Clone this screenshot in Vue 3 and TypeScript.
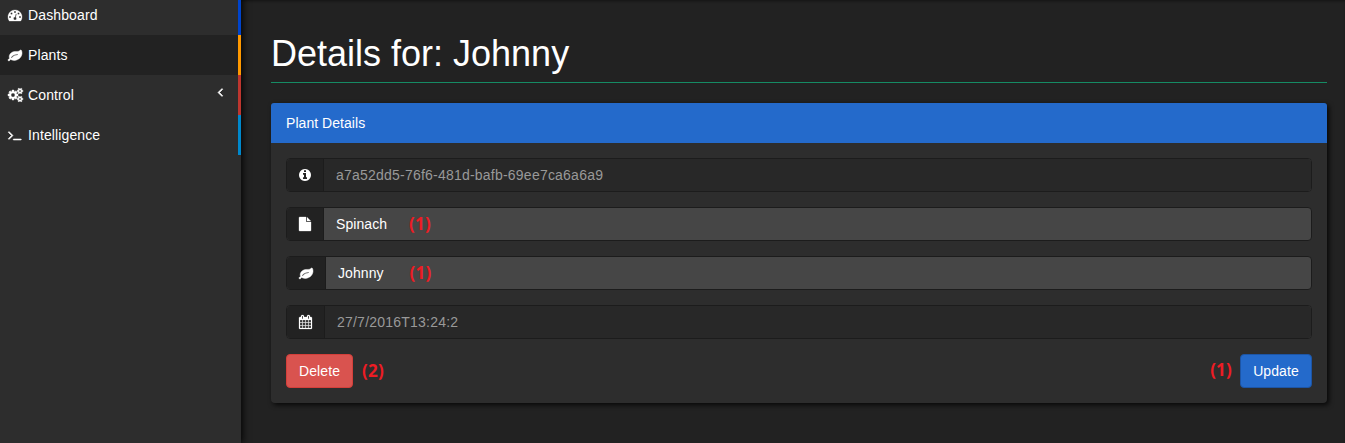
<script setup lang="ts">
import { ref } from 'vue'

interface Glyph { width: number; x: number; path: string; weight?: number }
interface NavItem { label: string; glyph: Glyph; accent: string; active?: boolean; expandable?: boolean }
interface Field { glyph: Glyph; value: string; kind: string; disabled: boolean; note?: string }

const leaf: Glyph = {
  width: 14, x: 0, weight: 60,
  path: 'M1280 832q0-26-19-45t-45-19q-172 0-318 49.5t-259.5 134-235.5 219.5q-19 21-19 45 0 26 19 45t45 19q24 0 45-19 27-24 74-71t67-66q137-124 268.5-176t313.5-52q26 0 45-19t19-45zm512-198q0 95-20 193-46 224-184.5 383t-357.5 268q-214 108-438 108-148 0-286-47-15-5-88-42t-96-37q-16 0-39.5 32t-45 70-52.5 70-60 32q-43 0-63.5-17.5t-45.5-59.5q-2-4-6-11t-5.5-10-3-9.5-1.5-13.5q0-35 31-73.5t68-65.5 68-56 31-48q0-4-14-38t-16-44q-9-51-9-104 0-115 43.5-220t119-184.5 170.5-139 204-95.5q55-18 145-25.5t179.5-9 178.5-6 163.5-24 113.5-56.5l29.5-29.5 29.5-28 27-20 36.5-16 43.5-4.5q39 0 70.5 46t47.5 112 24 124 8 96z',
}
const gauge: Glyph = {
  width: 14, x: 0, weight: 40,
  path: 'M384 1152q0-53-37.5-90.5t-90.5-37.5-90.5 37.5-37.5 90.5 37.5 90.5 90.5 37.5 90.5-37.5 37.5-90.5zm192-448q0-53-37.5-90.5t-90.5-37.5-90.5 37.5-37.5 90.5 37.5 90.5 90.5 37.5 90.5-37.5 37.5-90.5zm428 481l101-382q6-26-7.5-48.5t-38.5-29.5-48 6.5-30 39.5l-101 382q-60 5-107 43.5t-63 98.5q-20 77 20 146t117 89 146-20 89-117q16-60-6-117t-72-91zm660-33q0-53-37.5-90.5t-90.5-37.5-90.5 37.5-37.5 90.5 37.5 90.5 90.5 37.5 90.5-37.5 37.5-90.5zm-640-640q0-53-37.5-90.5t-90.5-37.5-90.5 37.5-37.5 90.5 37.5 90.5 90.5 37.5 90.5-37.5 37.5-90.5zm448 192q0-53-37.5-90.5t-90.5-37.5-90.5 37.5-37.5 90.5 37.5 90.5 90.5 37.5 90.5-37.5 37.5-90.5zm320 448q0 261-141 483-19 29-54 29h-1402q-35 0-54-29-141-221-141-483 0-182 71-348t191-286 286-191 348-71 348 71 286 191 191 286 71 348z',
}
const smallCog = 'v140q0 16-149 31-12 27-30 52 51 113 51 138 0 4-4 7-122 71-124 71-8 0-46-47t-52-68q-20 2-30 2t-30-2q-14 21-52 68t-46 47q-2 0-124-71-4-3-4-7 0-25 51-138-18-25-30-52-149-15-149-31v-140q0-16 149-31 13-29 30-52-51-113-51-138 0-4 4-7 4-2 35-20t59-34 30-16q8 0 46 46.5t52 67.5q20-2 30-2t30 2q51-71 92-112l6-2q4 0 124 70 4 3 4 7 0 25-51 138 17 23 30 52 149 15 149 31z'
const cogs: Glyph = {
  width: 15, x: 0, weight: 60,
  path: 'M896 896q0-106-75-181t-181-75-181 75-75 181 75 181 181 75 181-75 75-181zm768 512q0-52-38-90t-90-38-90 38-38 90q0 53 37.5 90.5t90.5 37.5 90.5-37.5 37.5-90.5zm0-1024q0-52-38-90t-90-38-90 38-38 90q0 53 37.5 90.5t90.5 37.5 90.5-37.5 37.5-90.5zm-384 421v185q0 10-7 19.5t-16 10.5l-155 24q-11 35-32 76 34 48 90 115 7 11 7 20 0 12-7 19-23 30-82.5 89.5t-78.5 59.5q-11 0-21-7l-115-90q-37 19-77 31-11 108-23 155-7 24-30 24h-186q-11 0-20-7.5t-10-17.5l-23-153q-34-10-75-31l-118 89q-7 7-20 7-11 0-21-8-144-133-144-160 0-9 7-19 10-14 41-53t47-61q-23-44-35-82l-152-24q-10-1-17-9.5t-7-19.5v-185q0-10 7-19.5t16-10.5l155-24q11-35 32-76-34-48-90-115-7-11-7-20 0-12 7-20 22-30 82-89t79-59q11 0 21 7l115 90q34-18 77-32 11-108 23-154 7-24 30-24h186q11 0 20 7.5t10 17.5l23 153q34 10 75 31l118-89q8-7 20-7 11 0 21 8 144 133 144 160 0 8-7 19-12 16-42 54t-45 60q23 48 34 82l152 23q10 2 17 10.5t7 19.5zM1920 1338' + smallCog + 'M1920 314' + smallCog,
}
const terminal: Glyph = {
  width: 14, x: -32, weight: 70,
  path: 'M585 983l-466 466q-10 10-23 10t-23-10l-50-50q-10-10-10-23t10-23l393-393-393-393q-10-10-10-23t10-23l50-50q10-10 23-10t23 10l466 466q10 10 10 23t-10 23zm1079 457v64q0 14-9 23t-23 9h-960q-14 0-23-9t-9-23v-64q0-14 9-23t23-9h960q14 0 23 9t9 23z',
}
const info: Glyph = {
  width: 12, x: 128,
  path: 'M1152 1376v-160q0-14-9-23t-23-9h-96v-512q0-14-9-23t-23-9h-320q-14 0-23 9t-9 23v160q0 14 9 23t23 9h96v320h-96q-14 0-23 9t-9 23v160q0 14 9 23t23 9h448q14 0 23-9t9-23zm-128-896v-160q0-14-9-23t-23-9h-192q-14 0-23 9t-9 23v160q0 14 9 23t23 9h192q14 0 23-9t9-23zm640 416q0 209-103 385.5t-279.5 279.5-385.5 103-385.5-103-279.5-279.5-103-385.5 103-385.5 279.5-279.5 385.5-103 385.5 103 279.5 279.5 103 385.5z',
}
const file: Glyph = {
  width: 12, x: 128, weight: 40,
  path: 'M1152 512v-472q22 14 36 28l408 408q14 14 28 36h-472zm-128 32q0 40 28 68t68 28h544v1056q0 40-28 68t-68 28h-1344q-40 0-68-28t-28-68v-1600q0-40 28-68t68-28h800v544z',
}
const calendar: Glyph = {
  width: 13, x: 64, weight: 30,
  path: 'M192 1664h288v-288h-288v288zm352 0h320v-288h-320v288zm-352-352h288v-320h-288v320zm352 0h320v-320h-320v320zm-352-384h288v-288h-288v288zm736 736h320v-288h-320v288zm-384-736h320v-288h-320v288zm768 736h288v-288h-288v288zm-384-352h320v-320h-320v320zm-352-864v-288q0-13-9.5-22.5t-22.5-9.5h-64q-13 0-22.5 9.5t-9.5 22.5v288q0 13 9.5 22.5t22.5 9.5h64q13 0 22.5-9.5t9.5-22.5zm736 864h288v-320h-288v320zm-384-384h320v-288h-320v288zm384 0h288v-288h-288v288zm32-480v-288q0-13-9.5-22.5t-22.5-9.5h-64q-13 0-22.5 9.5t-9.5 22.5v288q0 13 9.5 22.5t22.5 9.5h64q13 0 22.5-9.5t9.5-22.5zm384-64v1280q0 52-38 90t-90 38h-1408q-52 0-90-38t-38-90v-1280q0-52 38-90t90-38h128v-96q0-66 47-113t113-47h64q66 0 113 47t47 113v96h384v-96q0-66 47-113t113-47h64q66 0 113 47t47 113v96h128q52 0 90 38t38 90z',
}

const box = (g: Glyph) => `${g.x} 0 ${g.width * 128} 1792`

const nav: NavItem[] = [
  { label: 'Dashboard', glyph: gauge, accent: 'blue' },
  { label: 'Plants', glyph: leaf, accent: 'orange', active: true },
  { label: 'Control', glyph: cogs, accent: 'red', expandable: true },
  { label: 'Intelligence', glyph: terminal, accent: 'cyan' },
]

const fields = ref<Field[]>([
  { glyph: info, value: 'a7a52dd5-76f6-481d-bafb-69ee7ca6a6a9', kind: 'id', disabled: true },
  { glyph: file, value: 'Spinach', kind: 'type', disabled: false, note: '(1)' },
  { glyph: leaf, value: 'Johnny', kind: 'name', disabled: false, note: '(1)' },
  { glyph: calendar, value: '27/7/2016T13:24:2', kind: 'date', disabled: true },
])
</script>

<template>
  <div class="layout">
    <nav class="sidebar">
      <a v-for="item in nav" :key="item.label" class="nav-item" :class="[item.accent, { active: item.active }]">
        <span class="nav-icon">
          <svg :width="item.glyph.width" height="14" :viewBox="box(item.glyph)">
            <path :d="item.glyph.path" :stroke-width="item.glyph.weight ?? 0" />
          </svg>
        </span>
        <span>{{ item.label }}</span>
        <svg v-if="item.expandable" class="chevron" width="5" height="14" viewBox="608 0 640 1792">
          <path stroke-width="80" d="M1203 544q0 13-10 23l-393 393 393 393q10 10 10 23t-10 23l-50 50q-10 10-23 10t-23-10l-466-466q-10-10-10-23t10-23l466-466q10-10 23-10t23 10l50 50q10 10 10 23z" />
        </svg>
      </a>
    </nav>
    <main class="content">
      <h1>Details for: Johnny</h1>
      <section class="panel">
        <header>Plant Details</header>
        <div class="panel-body">
          <div v-for="field in fields" :key="field.kind" class="field" :class="[field.kind, { disabled: field.disabled }]">
            <span class="addon">
              <svg :width="field.glyph.width" height="14" :viewBox="box(field.glyph)">
                <path :d="field.glyph.path" :stroke-width="field.glyph.weight ?? 0" />
              </svg>
            </span>
            <div class="control">
              <span>{{ field.value }}</span>
              <b v-if="field.note" class="note">{{ field.note }}</b>
            </div>
          </div>
          <div class="actions">
            <button class="delete">Delete</button>
            <b class="note">(2)</b>
            <b class="note last">(1)</b>
            <button class="update">Update</button>
          </div>
        </div>
      </section>
    </main>
  </div>
</template>

<style>
body {
  margin: 0;
  background: #222;
  overflow: hidden;
}
</style>

<style scoped>
.layout, .layout * { box-sizing: border-box; }
.layout {
  display: flex;
  height: 443px;
  overflow: hidden;
  background: #222;
  color: #fff;
  font: 14px/20px "Liberation Sans", Arial, sans-serif;
}
svg { display: block; overflow: visible; fill: currentColor; }
path { stroke: currentColor; }
path[stroke-width="0"] { stroke: none; }
.sidebar {
  width: 241px;
  flex: none;
  margin-top: -5px;
  background: #2d2d2d;
  box-shadow: 2px 0 7px rgba(0, 0, 0, .8);
}
.nav-item {
  display: flex;
  align-items: center;
  height: 40px;
  padding-left: 8px;
  border-right: 3px solid;
  letter-spacing: .12px;
}
.nav-item > span { color: #fff; }
.active { background: #222; }
.blue { border-color: #0044cc; }
.orange { border-color: #ff9900; }
.red { border-color: #bd362f; }
.cyan { border-color: #0088cc; }
.nav-icon { width: 20px; }
.chevron { margin: -6px 15px 0 auto; color: #fff; }
.content {
  flex: 1;
  padding: 32px 18px 0 30px;
  box-shadow: inset 0 2px 3px -1px rgba(0, 0, 0, .45);
}
h1 {
  height: 51px;
  margin: 0 0 20px;
  border-bottom: 1px solid #168b64;
  font-size: 36px;
  line-height: 44px;
  font-weight: 400;
}
.panel {
  height: 300px;
  border-radius: 4px;
  background: #2d2d2d;
  box-shadow: 2px 2px 5px rgba(0, 0, 0, .8);
}
header {
  height: 40px;
  padding: 10px 15px;
  border-radius: 3px 3px 0 0;
  background: #246acb;
  letter-spacing: .05px;
}
.panel-body {
  display: flex;
  flex-direction: column;
  gap: 15px;
  padding: 15px;
}
.field {
  display: flex;
  height: 34px;
  border: 1px solid #1c1c1c;
  border-radius: 4px;
  background: #464646;
  overflow: hidden;
  letter-spacing: .07px;
}
.addon {
  display: flex;
  align-items: center;
  padding: 0 12px;
  background: #222;
}
.control {
  display: flex;
  flex: 1;
  align-items: center;
  padding-left: 12px;
  border-left: 1px solid #1c1c1c;
}
.disabled .control {
  background: #282828;
  color: #999;
  letter-spacing: .22px;
}
.note {
  color: #ed1c24;
  font: 700 17px/20px "Open Sans", sans-serif;
  letter-spacing: .2px;
}
.type .note { margin-left: 22px; }
.name .note { margin-left: 26px; }
.actions { display: flex; align-items: center; }
button {
  height: 34px;
  padding: 0 12px;
  border: 1px solid;
  border-radius: 4px;
  color: #fff;
  font: inherit;
  letter-spacing: .1px;
}
.delete { width: 67px; margin-right: 9px; border-color: #d43f3a; background: #d9534f; }
.update { width: 72px; margin-left: 8px; border-color: #1d55a5; background: #246acb; }
.last { margin-left: auto; padding-bottom: 2px; }
</style>
